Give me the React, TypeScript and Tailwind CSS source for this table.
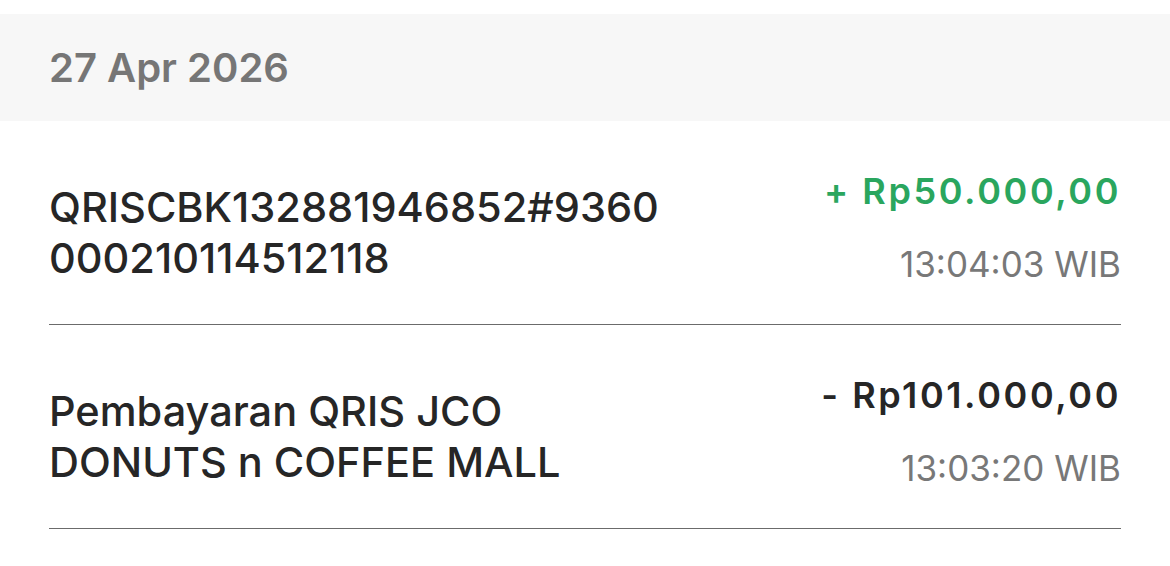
import React from "react";

type Txn = {
  title: string;
  amount: string;
  credit: boolean;
  time: string;
};

const txns: Txn[] = [
  {
    title: "QRISCBK132881946852#9360000210114512118",
    amount: "+ Rp50.000,00",
    credit: true,
    time: "13:04:03 WIB",
  },
  {
    title: "Pembayaran QRIS JCO DONUTS n COFFEE MALL",
    amount: "- Rp101.000,00",
    credit: false,
    time: "13:03:20 WIB",
  },
];

function TxnRow({ txn }: { txn: Txn }) {
  return (
    <div className="flex items-start justify-between border-b border-[#6b6b6b] pt-[49px] pb-[38px]">
      <div className="mt-3 w-[622px] break-words font-['Inter',sans-serif] text-[41.5px] leading-[51px] font-medium text-[#262626]">
        {txn.title}
      </div>
      <div className="flex flex-col items-end font-['Inter',sans-serif]">
        <div
          className={
            txn.credit
              ? "text-[36px] leading-[43px] font-semibold tracking-[2.6px] text-[#2aa65e]"
              : "text-[36px] leading-[43px] font-semibold tracking-[2.6px] text-[#262626]"
          }
        >
          {txn.amount}
        </div>
        <div className="mt-[30px] text-[35px] leading-[43px] text-[#787878]">
          {txn.time}
        </div>
      </div>
    </div>
  );
}

export default function App() {
  return (
    <main className="min-h-screen w-full bg-white pt-[14px]">
      {/* date header */}
      <div className="flex h-[107px] items-center bg-[#f7f7f7] px-[49px]">
        <span className="font-['Inter',sans-serif] text-[40px] font-semibold text-[#767676]">
          27 Apr 2026
        </span>
      </div>
      <div className="px-[49px]">
        {txns.map((t) => (
          <TxnRow key={t.time} txn={t} />
        ))}
      </div>
    </main>
  );
}
